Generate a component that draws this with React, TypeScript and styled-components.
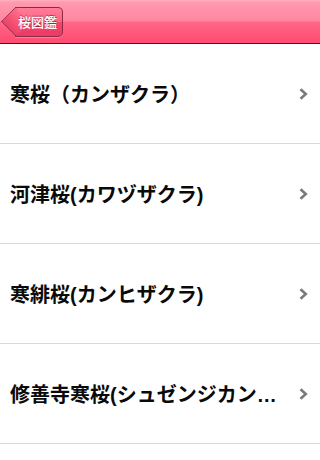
import React from "react";
import styled, { createGlobalStyle } from "styled-components";

const GlobalStyle = createGlobalStyle`
  html, body { margin: 0; padding: 0; background: #ffffff; }
  body { font-family: "Noto Sans CJK JP", "Noto Sans", sans-serif; }
`;

const Screen = styled.div`
  width: 320px;
  height: 460px;
  overflow: hidden;
  background: #ffffff;
`;

const NavBar = styled.header`
  height: 43px;
  border-bottom: 1px solid #4a0d1c;
  background: linear-gradient(
    to bottom,
    #ffb3c2 0px,
    #ff9ab0 2px,
    #ff85a0 21px,
    #ff6787 22px,
    #ff4b72 43px
  );
  display: flex;
  align-items: center;
  padding-left: 5px;
`;

const BackButton = styled.button`
  position: relative;
  height: 30px;
  margin-left: 10px;
  padding: 0 5px 0 3px;
  border: 1px solid #8e2a42;
  border-left: none;
  border-radius: 0 5px 5px 0;
  background: linear-gradient(to bottom, #ff7d98 0%, #ff6283 50%, #f3456d 51%, #ec3b64 100%);
  color: #ffffff;
  font-family: "Noto Sans CJK JP", sans-serif;
  font-size: 13px;
  font-weight: 500;
  line-height: 28px;
  text-shadow: 0 -1px 0 rgba(90, 10, 30, 0.55);
  box-shadow: 0 1px 0 rgba(255, 255, 255, 0.25);
  cursor: pointer;

  &::before {
    content: "";
    position: absolute;
    left: -10px;
    top: 3.5px;
    width: 20px;
    height: 20px;
    transform: rotate(45deg);
    border-left: 1px solid #8e2a42;
    border-bottom: 1px solid #8e2a42;
    border-radius: 0 0 0 2px;
    background: linear-gradient(to bottom, #ff6f8c, #ee3f67);
    z-index: 0;
  }
`;

const BackLabel = styled.span`
  position: relative;
  z-index: 1;
`;

const List = styled.ul`
  list-style: none;
  margin: 0;
  padding: 0;
`;

const Row = styled.li`
  height: 99px;
  border-bottom: 1px solid #d9d9d9;
  display: flex;
  align-items: center;
  padding: 0 12px 0 10px;
  gap: 20px;
`;

const Title = styled.span`
  flex: 1;
  min-width: 0;
  white-space: nowrap;
  overflow: hidden;
  text-overflow: ellipsis;
  font-family: "Liberation Sans", "Noto Sans CJK JP", sans-serif;
  font-weight: 700;
  font-size: 20px;
  color: #0a0a0a;
`;

const Chevron = () => (
  <svg width="9" height="12" viewBox="0 0 9 12" style={{ flex: "none" }}>
    <path d="M1.5 1.2 L6.8 6 L1.5 10.8" fill="none" stroke="#7a7a7a" strokeWidth="2.6" />
  </svg>
);

const items = [
  "寒桜（カンザクラ）",
  "河津桜(カワヅザクラ)",
  "寒緋桜(カンヒザクラ)",
  "修善寺寒桜(シュゼンジカンザクラ)",
];

export default function App() {
  return (
    <>
      <GlobalStyle />
      <Screen>
        <NavBar>
          <BackButton>
            <BackLabel>桜図鑑</BackLabel>
          </BackButton>
        </NavBar>
        <List>
          {items.map((t) => (
            <Row key={t}>
              <Title>{t}</Title>
              <Chevron />
            </Row>
          ))}
        </List>
      </Screen>
    </>
  );
}
